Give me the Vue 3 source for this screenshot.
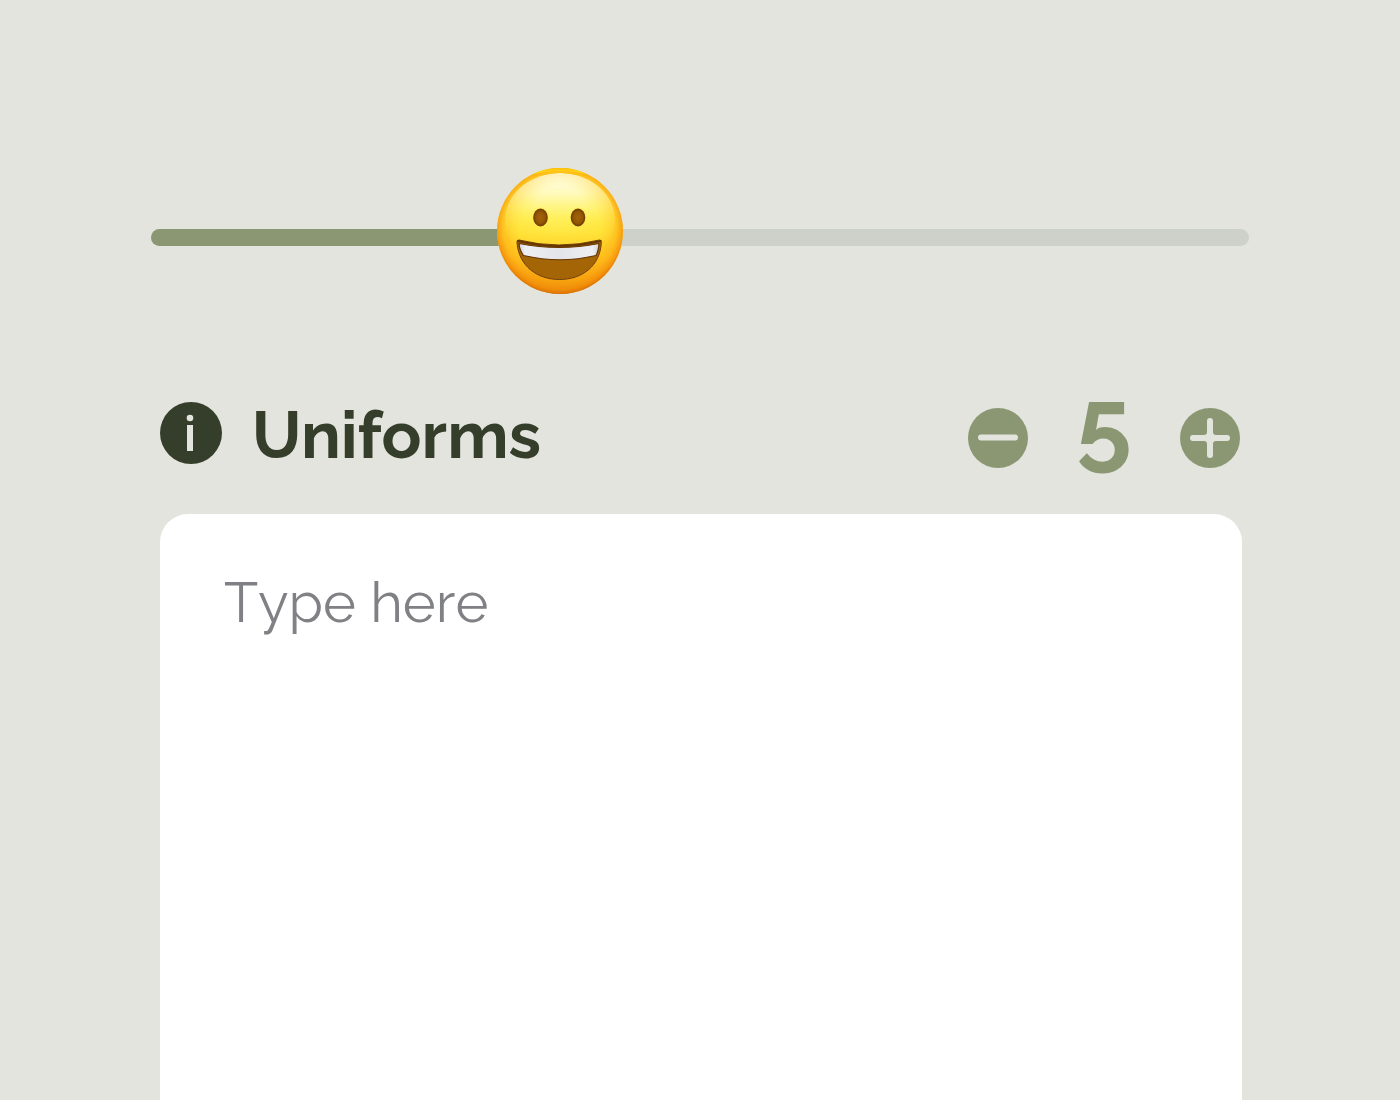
<script setup>
import { ref, computed } from 'vue'

const mood = ref(35.6)
const count = ref(5)
const note = ref('')

const faceStyle = computed(() => ({
  left: `calc((100% - 126px) * ${mood.value / 100})`
}))
const fillStyle = computed(() => ({
  width: `calc((100% - 126px) * ${mood.value / 100} + 63px)`
}))

const decrease = () => {
  if (count.value > 0) count.value--
}

const increase = () => {
  count.value++
}
</script>

<template>
  <main class="page">
    <div class="slider">
      <div class="track">
        <div class="fill" :style="fillStyle"></div>
      </div>
      <svg class="face" :style="faceStyle" viewBox="0 0 126 126" aria-hidden="true">
        <defs>
          <linearGradient id="skin" x1="0" y1="0" x2="0" y2="1">
            <stop offset="0" stop-color="#ffd21c" />
            <stop offset="0.3" stop-color="#ffe93c" />
            <stop offset="0.5" stop-color="#ffdf2e" />
            <stop offset="0.7" stop-color="#ffca22" />
            <stop offset="0.88" stop-color="#f4a610" />
            <stop offset="1" stop-color="#e28a08" />
          </linearGradient>
          <radialGradient id="rim" cx="0.5" cy="0.47" r="0.54">
            <stop offset="0.6" stop-color="#ff9d0c" stop-opacity="0" />
            <stop offset="0.82" stop-color="#fd9a0e" stop-opacity="0.35" />
            <stop offset="0.92" stop-color="#f38a08" stop-opacity="0.75" />
            <stop offset="1" stop-color="#cf6604" />
          </radialGradient>
          <linearGradient id="top" x1="0" y1="0" x2="0" y2="1">
            <stop offset="0" stop-color="#ffbf0c" />
            <stop offset="1" stop-color="#ffe01c" />
          </linearGradient>
          <linearGradient id="shine" x1="0" y1="0" x2="0" y2="1">
            <stop offset="0" stop-color="#fffff0" />
            <stop offset="0.22" stop-color="#fffccb" stop-opacity="0.9" />
            <stop offset="0.5" stop-color="#fff670" stop-opacity="0.6" />
            <stop offset="1" stop-color="#ffe83a" stop-opacity="0" />
          </linearGradient>
          <radialGradient id="spread" cx="0.5" cy="0.35" r="0.6">
            <stop offset="0.35" stop-color="#fff" />
            <stop offset="1" stop-color="#fff" stop-opacity="0.25" />
          </radialGradient>
          <mask id="soft">
            <ellipse cx="63" cy="52" rx="55" ry="47" fill="url(#spread)" />
          </mask>
          <radialGradient id="eye">
            <stop offset="0" stop-color="#a36407" />
            <stop offset="0.65" stop-color="#935606" />
            <stop offset="1" stop-color="#6b3800" />
          </radialGradient>
          <linearGradient id="teeth" x1="0" y1="0" x2="1" y2="0">
            <stop offset="0" stop-color="#d2d3da" />
            <stop offset="0.08" stop-color="#eeeff3" />
            <stop offset="0.5" stop-color="#e3e4ea" />
            <stop offset="0.92" stop-color="#eeeff3" />
            <stop offset="1" stop-color="#d2d3da" />
          </linearGradient>
        </defs>
        <circle cx="63" cy="63" r="63" fill="url(#skin)" />
        <circle cx="63" cy="63" r="63" fill="url(#rim)" />
        <path d="M36 6A63 63 0 0 1 90 6Q63 0 36 6z" fill="url(#top)" />
        <ellipse cx="63" cy="52" rx="55" ry="47" fill="url(#shine)" mask="url(#soft)" />
        <ellipse cx="43.500" cy="50" rx="8.500" ry="10.500" fill="#ffec4a" opacity="0.6" />
        <ellipse cx="81" cy="50" rx="8.500" ry="10.500" fill="#ffec4a" opacity="0.6" />
        <ellipse cx="43.500" cy="49.500" rx="7.300" ry="9" fill="url(#eye)" />
        <ellipse cx="81" cy="49.500" rx="7.300" ry="9" fill="url(#eye)" />
        <path
          d="M22 72Q62 82 102.500 72Q104.500 71.500 104.300 75C103 98 85 111.500 62.500 111.500S22 98 20 75Q19.500 71.500 22 72z"
          fill="#a46507"
          stroke="#74400a"
          stroke-width="1"
        />
        <path
          d="M22 75.500Q62 83.500 102 75.500Q101.500 83 99 87.500Q63 96 26.500 87.500Q22.500 82 22 75.500z"
          fill="url(#teeth)"
          stroke="#663600"
          stroke-width="1.200"
          stroke-linejoin="round"
        />
        <path
          d="M21 73Q62 83 103.500 73"
          fill="none"
          stroke="#663600"
          stroke-width="2"
          stroke-linecap="round"
        />
      </svg>
      <input
        v-model.number="mood"
        class="range"
        type="range"
        min="0"
        max="100"
        step="0.1"
        aria-label="Mood"
      />
    </div>

    <section class="content">
      <div class="header">
        <div class="title">
          <button class="icon-button" type="button" aria-label="Information">
            <svg class="info" viewBox="0 0 62 62">
              <circle cx="31" cy="31" r="31" fill="#353e2a" />
              <circle cx="30" cy="16" r="3.300" fill="#e2e4dd" />
              <path d="M27 23h6v26h-6z" fill="#e2e4dd" />
            </svg>
          </button>
          <label class="name" for="note">Uniforms</label>
        </div>
        <div class="counter">
          <button class="icon-button" type="button" aria-label="Decrease" @click="decrease">
            <svg class="step" viewBox="0 0 60 60">
              <circle cx="30" cy="30" r="30" fill="#8b9773" />
              <rect x="10" y="26.500" width="40" height="6" rx="3" fill="#e2e4dd" />
            </svg>
          </button>
          <output class="count">{{ count }}</output>
          <button class="icon-button" type="button" aria-label="Increase" @click="increase">
            <svg class="step" viewBox="0 0 60 60">
              <circle cx="30" cy="30" r="30" fill="#8b9773" />
              <path
                d="M30 10a3 3 0 0 1 3 3v11q0 3 3 3h11a3 3 0 0 1 0 6H36q-3 0-3 3v11a3 3 0 0 1-6 0V36q0-3-3-3H13a3 3 0 0 1 0-6h11q3 0 3-3V13a3 3 0 0 1 3-3z"
                fill="#e2e4dd"
              />
            </svg>
          </button>
        </div>
      </div>
      <textarea id="note" v-model="note" class="note" placeholder="Type here"></textarea>
    </section>
  </main>
</template>

<style>
body {
  background: #e2e4dd;
}
</style>

<style scoped>
.page {
  display: flex;
  flex-direction: column;
  box-sizing: border-box;
  min-height: 100vh;
  padding: 168px 151px 0;
  background: #e2e4dd;
  font-family: Raleway, Lato, sans-serif;
}

.slider {
  position: relative;
  display: flex;
  align-items: center;
  height: 138px;
  margin-bottom: 88px;
}

.track {
  flex: 1;
  height: 17px;
  border-radius: 9px;
  background: #ced1ca;
  overflow: hidden;
}

.fill {
  height: 100%;
  background: #8b9773;
}

.face {
  position: absolute;
  top: 0;
  width: 126px;
  height: 126px;
}

/* invisible native control on top of the drawn one */
.range {
  position: absolute;
  inset: 0;
  width: 100%;
  height: 100%;
  margin: 0;
  opacity: 0;
  cursor: pointer;
}

.range::-webkit-slider-thumb {
  appearance: none;
  width: 126px;
  height: 126px;
}

.content {
  display: flex;
  flex: 1;
  flex-direction: column;
  gap: 32px;
  padding: 0 7px 0 9px;
}

.header {
  display: flex;
  justify-content: space-between;
  align-items: flex-start;
}

.title {
  display: flex;
  align-items: center;
  gap: 30px;
  height: 78px;
  color: #353e2a;
  font-size: 66px;
  font-weight: 700;
  line-height: 72px;
}

.name {
  padding-top: 4px;
}

.icon-button {
  display: flex;
  padding: 0;
  border: none;
  border-radius: 50%;
  background: none;
  cursor: pointer;
}

.info {
  width: 62px;
  height: 62px;
}

.counter {
  display: flex;
  align-items: center;
  height: 88px;
  margin-right: 2px;
}

.step {
  width: 60px;
  height: 60px;
}

.count {
  width: 152px;
  color: #8b9773;
  font-size: 100px;
  font-variant-numeric: lining-nums;
  font-weight: 700;
  line-height: 88px;
  text-align: center;
}

.note {
  flex: 1;
  box-sizing: border-box;
  width: 100%;
  min-height: 586px;
  padding: 54px 64px;
  border: none;
  border-radius: 28px 28px 0 0;
  outline: none;
  background: #fff;
  color: #353e2a;
  font-family: inherit;
  font-size: 56px;
  font-kerning: none;
  line-height: 68px;
  resize: none;
}

.note::placeholder {
  color: #808184;
  opacity: 1;
}
</style>
